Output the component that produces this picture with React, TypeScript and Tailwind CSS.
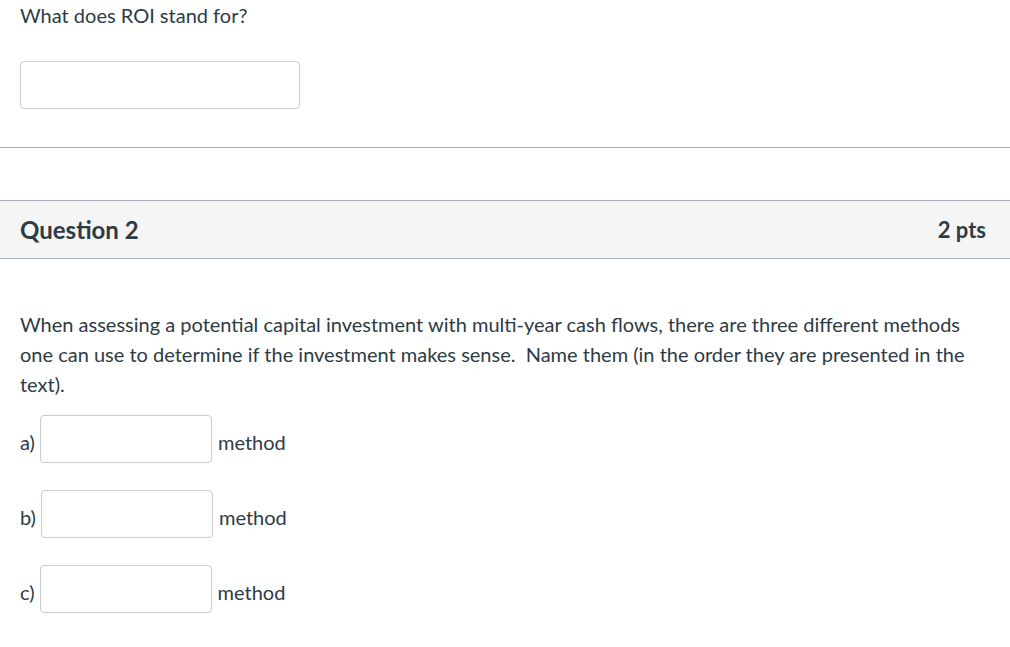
const rows = [
  { label: "a)" },
  { label: "b)" },
  { label: "c)" },
];

function AnswerRow({ label }: { label: string }) {
  return (
    <div className="flex h-[48px] items-center">
      <span className="mt-[6px] mr-[5px]">{label}</span>
      <input
        type="text"
        className="h-[48px] w-[172px] rounded-[4px] border border-[#c7cdd1] bg-white px-3 outline-none"
      />
      <span className="mt-[6px] ml-[6px]">method</span>
    </div>
  );
}

export default function App() {
  return (
    <div
      className="min-h-screen bg-white text-[20px] leading-[30px] text-[#2d3b45]"
      style={{ fontFamily: "Lato, 'Liberation Sans', sans-serif" }}
    >
      <div className="px-5">
        <p>What does ROI stand for?</p>
        <input
          type="text"
          className="mt-[31px] block h-[48px] w-[280px] rounded-[4px] border border-[#c7cdd1] bg-white px-3 outline-none"
        />
      </div>

      <div className="mt-[38px] border-t border-[#a5afb5]" />

      <div className="mt-[52px] flex h-[59px] items-center justify-between border-y border-[#a5afb5] bg-[#f5f5f5] pl-5 pr-6">
        <h2 className="text-[24px] font-bold">Question 2</h2>
        <span className="text-[22px] font-bold">2 pts</span>
      </div>

      <div className="px-5 pt-[50px]">
        <p className="w-[960px]">
          When assessing a potential capital investment with multi-year cash flows, there are three different methods one can use to determine if the investment makes sense.&nbsp; Name them (in the order they are presented in the text).
        </p>
        <div className="mt-4 flex flex-col gap-[27px]">
          {rows.map((r) => (
            <AnswerRow key={r.label} label={r.label} />
          ))}
        </div>
      </div>
    </div>
  );
}
